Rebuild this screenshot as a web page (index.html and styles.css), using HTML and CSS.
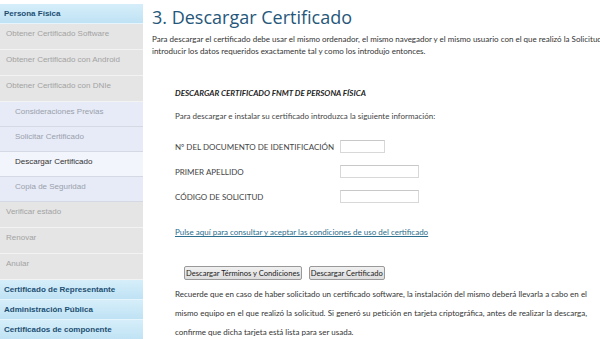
FILE: index.html
```html
<!doctype html>
<html lang="es">
<head>
	<meta charset="UTF-8">
	<title>Descargar Certificado</title>
	<link rel="stylesheet" href="styles.css">
</head>
<body>
	<div class="page">
		<nav class="menu">
			<div class="menu_head">Persona Física</div>
			<div class="item">Obtener Certificado Software</div>
			<div class="item">Obtener Certificado con Android</div>
			<div class="item">Obtener Certificado con DNIe</div>
			<div class="item sub">Consideraciones Previas</div>
			<div class="item sub">Solicitar Certificado</div>
			<div class="item sub active">Descargar Certificado</div>
			<div class="item sub">Copia de Seguridad</div>
			<div class="item">Verificar estado</div>
			<div class="item">Renovar</div>
			<div class="item">Anular</div>
			<div class="menu_head">Certificado de Representante</div>
			<div class="menu_head">Administración Pública</div>
			<div class="menu_head">Certificados de componente</div>
		</nav>

		<section class="content">
			<h1 class="title">3. Descargar Certificado</h1>
			<p class="intro">Para descargar el certificado debe usar el mismo ordenador, el mismo navegador y el mismo usuario con el que realizó la Solicitud e introducir los datos requeridos exactamente tal y como los introdujo entonces.</p>

			<div class="form">
				<h2 class="form_title">DESCARGAR CERTIFICADO FNMT DE PERSONA FÍSICA</h2>
				<p class="form_text">Para descargar e instalar su certificado introduzca la siguiente información:</p>

				<div class="row">
					<label>Nº DEL DOCUMENTO DE IDENTIFICACIÓN</label>
					<input type="text" class="short">
				</div>
				<div class="row">
					<label>PRIMER APELLIDO</label>
					<input type="text">
				</div>
				<div class="row">
					<label>CÓDIGO DE SOLICITUD</label>
					<input type="text">
				</div>

				<a href="#" class="terms">Pulse aquí para consultar y aceptar las condiciones de uso del certificado</a>

				<div class="buttons">
					<button>Descargar Términos y Condiciones</button>
					<button>Descargar Certificado</button>
				</div>

				<p class="note">Recuerde que en caso de haber solicitado un certificado software, la instalación del mismo deberá llevarla a cabo en el mismo equipo en el que realizó la solicitud. Si generó su petición en tarjeta criptográfica, antes de realizar la descarga, confirme que dicha tarjeta está lista para ser usada.</p>
			</div>
		</section>
	</div>
</body>
</html>
```

FILE: styles.css
```css
*{
	padding: 0;
	margin: 0;
	box-sizing: border-box;
}
html,body{
	width: 100%;
	height: 100%;
	overflow: hidden;
	background: #fff;
}
.page{
	display: flex;
	padding-top: 4px;
}

.menu{
	width: 143px;
	flex-shrink: 0;
	font-family: "Liberation Sans", Arial, sans-serif;
	font-size: 8px;
}
.menu_head{
	height: 20px;
	line-height: 20px;
	padding-left: 4px;
	font-weight: bold;
	color: #1d4f73;
	background: linear-gradient(#d6eefa, #bfe2f4);
	border-bottom: 1px solid #e6f4fb;
}
.menu_head:last-child{
	height: 21px;
}
.item{
	height: 26px;
	padding: 4px 0 0 6px;
	line-height: 11px;
	color: #a3a3a3;
	background: #e5e5e5;
	border-bottom: 1px solid #f3f3f3;
}
.sub{
	height: 25px;
	padding-left: 15px;
	color: #9a9fab;
	background: #e6ebf7;
	border-bottom: 1px solid #d4d9e4;
}
.active{
	background: #f3f5fc;
	color: #333;
}

.content{
	flex: 1;
	min-width: 0;
	padding-left: 9px;
	font-family: Lato, "Open Sans", sans-serif;
	font-size: 8px;
	color: #333;
}
.title{
	font-family: "Open Sans", "Noto Sans", sans-serif;
	font-weight: normal;
	font-size: 18px;
	line-height: 22px;
	color: #26577a;
	margin-top: 2px;
}
.intro{
	width: 490px;
	line-height: 12px;
	margin-top: 5px;
}
.form{
	padding-left: 23px;
	width: 435px;
	margin-top: 30px;
}
.form_title{
	font-size: 8px;
	font-style: italic;
	font-weight: bold;
	color: #222;
	line-height: 12px;
}
.form_text{
	line-height: 12px;
	margin-top: 11px;
	color: #444;
}
.row{
	display: flex;
	align-items: center;
	height: 25px;
	color: #444;
}
.row:first-of-type{
	margin-top: 12px;
}
.row label{
	width: 165px;
}
.row input{
	width: 79px;
	height: 13px;
	border: 1px solid #d8d8d8;
	border-top-color: #c8c8c8;
	outline: 0;
}
.row .short{
	width: 45px;
}
.terms{
	display: block;
	margin-top: 17px;
	line-height: 12px;
	color: #2b6d8c;
}
.buttons{
	display: flex;
	gap: 7px;
	margin-top: 28px;
	padding-left: 9px;
}
.buttons button{
	font-family: Lato, "Open Sans", sans-serif;
	font-size: 7.6px;
	height: 14px;
	padding: 0 1px;
	color: #222;
	background: linear-gradient(#f0f0f0, #dddddd);
	border: 1px solid #999;
	border-radius: 2px;
}
.note{
	width: 412px;
	line-height: 19px;
	text-align: justify;
	margin-top: 5px;
	color: #333;
}
```
